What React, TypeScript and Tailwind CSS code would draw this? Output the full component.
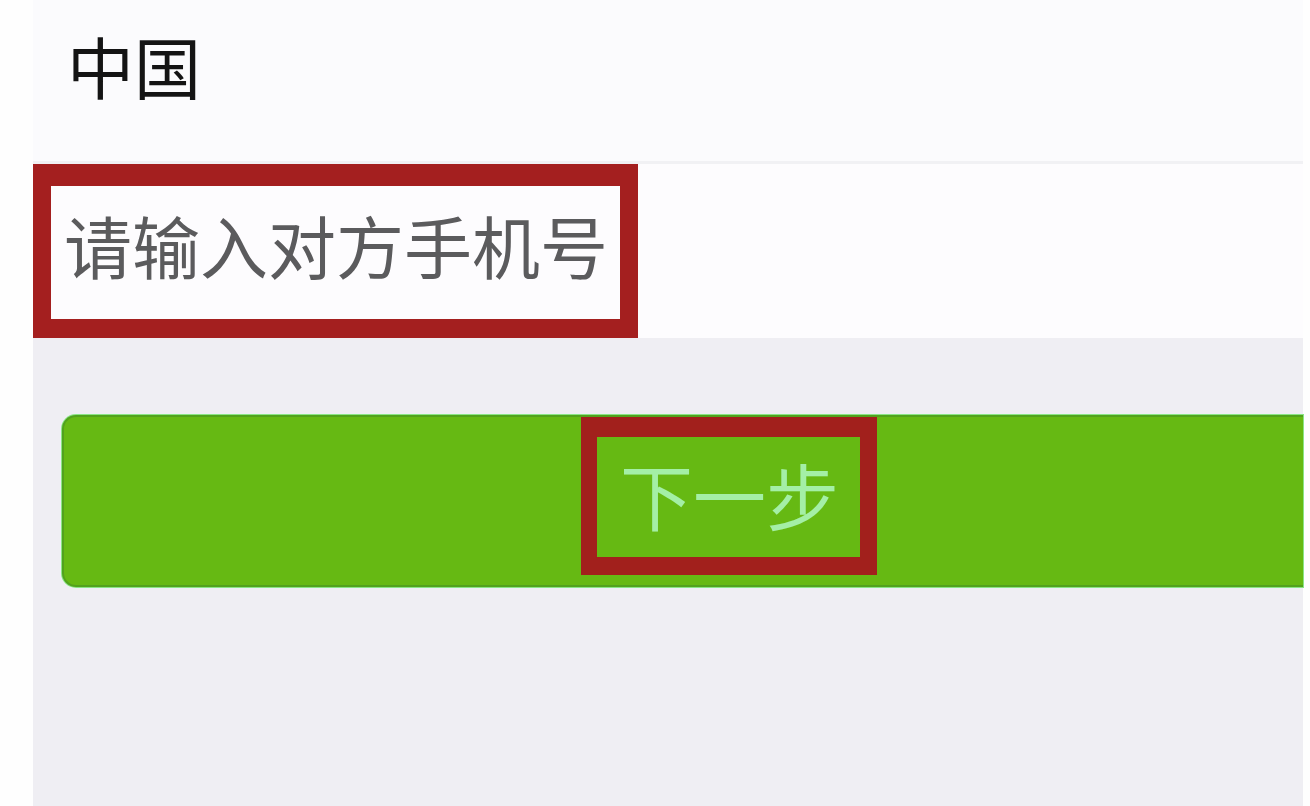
export default function App() {
  return (
    <div
      className="flex h-[806px] w-full bg-[#fefefe] pl-[33px] pr-[7px]"
      style={{ fontFamily: '"Noto Sans CJK SC", "Noto Sans", sans-serif' }}
    >
      <div className="flex flex-1 flex-col">
        {/* Header */}
        <div className="h-[161px] bg-[#fbfbfd] pl-[34px] pt-[31px]">
          <div className="text-[67px] leading-none text-[#141414]">中国</div>
        </div>
        <div className="h-[3px] bg-[#f1f1f4]" />

        {/* Input row */}
        <div className="flex h-[174px] bg-[#fdfcfe]">
          <div className="flex h-full w-[605px] items-center border-x-[18px] border-t-[22px] border-b-[19px] border-[#a41f1f] pb-[15px] pl-[13px]">
            <span className="text-[68px] leading-none text-[#5b5b5d]">请输入对方手机号</span>
          </div>
        </div>

        {/* Gray body */}
        <div className="flex-1 bg-[#efeef3] pl-[29px] pt-[77px]">
          <div className="flex h-[172px] rounded-l-[14px] border-2 border-r-0 border-[#52a21d] bg-[#66b913] pl-[517px] shadow-[0_0_0_1px_#8ae585]">
            <div className="flex h-[158px] w-[296px] items-center justify-center border-l-[16px] border-r-[17px] border-t-[20px] border-b-[18px] border-[#a2201c] pb-[8px] pl-[2px]">
              <span className="text-[73px] leading-none text-[#a4efa6]">下一步</span>
            </div>
          </div>
        </div>
      </div>
    </div>
  );
}
